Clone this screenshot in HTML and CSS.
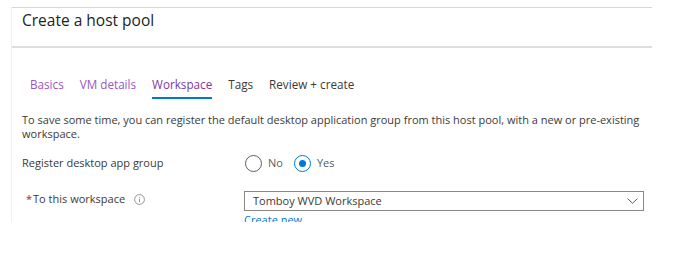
FILE: index.html
```html
<!DOCTYPE html>
<html lang="en">
<head>
    <meta charset="UTF-8">
    <meta name="viewport" content="width=device-width, initial-scale=1.0">
    <title>Create a host pool</title>
    <link rel="stylesheet" href="styles.css">
</head>
<body>
    <div class="blade">
        <div class="blade-header">
            <h1 class="blade-title">Create a host pool</h1>
        </div>
        <div class="blade-content">
            <div class="tabs">
                <span class="tab visited">Basics</span>
                <span class="tab visited">VM details</span>
                <span class="tab active">Workspace</span>
                <span class="tab">Tags</span>
                <span class="tab">Review + create</span>
            </div>

            <p class="intro">To save some time, you can register the default desktop application group from this host pool, with a new or pre-existing workspace.</p>

            <div class="field radio-row">
                <div class="label">Register desktop app group</div>
                <div class="radios">
                    <span class="radio"></span>
                    <span class="radio-text">No</span>
                    <span class="radio checked"></span>
                    <span class="radio-text">Yes</span>
                </div>
            </div>

            <div class="field">
                <div class="label required">
                    <span class="star">*</span>To this workspace
                    <svg class="info" width="11" height="11" viewBox="0 0 11 11">
                        <circle cx="5.5" cy="5.5" r="4.9" fill="none" stroke="#8a8886" stroke-width="0.9"/>
                        <rect x="5.05" y="4.6" width="0.9" height="3.6" fill="#8a8886"/>
                        <circle cx="5.5" cy="3.3" r="0.55" fill="#8a8886"/>
                    </svg>
                </div>
                <div class="control">
                    <div class="dropdown">
                        <span>Tomboy WVD Workspace</span>
                        <svg class="chevron" width="11" height="6" viewBox="0 0 11 6">
                            <polyline points="0.5,0.5 5.5,5.3 10.5,0.5" fill="none" stroke="#605e5c" stroke-width="1"/>
                        </svg>
                    </div>
                    <a class="create-new" href="#">Create new</a>
                </div>
            </div>
        </div>
    </div>
</body>
</html>
```

FILE: styles.css
```css
body {
    margin: 0;
    background-color: #fff;
    font-family: "Open Sans", "Noto Sans", sans-serif;
    color: #3b3a39;
}
.blade {
    width: 640px;
    height: 215px;
    margin: 7px 0 0 11px;
    border-left: 1px solid #f1f1f1;
    overflow: hidden;
}
.blade-header {
    height: 41px;
    border-top: 1px solid #d8d8d8;
    border-bottom: 2px solid #dedede;
    padding: 2px 0 0 10px;
    box-sizing: border-box;
}
.blade-title {
    margin: 0;
    font-size: 15.5px;
    font-weight: 400;
    line-height: 20px;
    color: #201f1e;
}
.blade-content {
    padding: 0 8px 0 10px;
}
.tabs {
    display: flex;
    gap: 16px;
    margin: 28px 0 0 8px;
}
.tab {
    font-size: 11.7px;
    line-height: 16px;
    padding-bottom: 5px;
    border-bottom: 2px solid transparent;
    color: #3b3a39;
}
.tab.visited {
    color: #9b55c4;
}
.tab.active {
    color: #7a3aa3;
    border-bottom-color: #0078d4;
}
.intro {
    margin: 14px 0 0 0;
    font-size: 11px;
    line-height: 13.5px;
}
.field {
    display: flex;
    align-items: flex-start;
    margin-top: 18px;
}
.radio-row {
    align-items: center;
    height: 20px;
    margin-top: 13px;
}
.label {
    width: 222px;
    flex-shrink: 0;
    font-size: 11px;
    line-height: 16px;
    margin-top: 0;
}
.label.required {
    padding-left: 4px;
    box-sizing: border-box;
    display: flex;
    align-items: center;
}
.star {
    color: #a4262c;
    margin-right: 1px;
}
.info {
    margin-left: 9px;
}
.radios {
    display: flex;
    align-items: center;
    padding-left: 1px;
}
.radio {
    width: 15px;
    height: 15px;
    border: 1px solid #605e5c;
    border-radius: 50%;
    display: flex;
    align-items: center;
    justify-content: center;
}
.radio.checked {
    border-color: #0078d4;
}
.radio.checked::after {
    content: "";
    width: 7px;
    height: 7px;
    border-radius: 50%;
    background-color: #0078d4;
}
.radio-text {
    font-size: 11px;
    line-height: 16px;
    color: #605e5c;
    margin: 0 11px 0 6px;
}
.control {
    flex: 1;
}
.dropdown {
    height: 20px;
    box-sizing: border-box;
    border: 1px solid #8a8886;
    display: flex;
    align-items: center;
    justify-content: space-between;
    padding: 0 5px 0 8px;
    font-size: 11px;
    line-height: 18px;
}
.create-new {
    display: block;
    margin-top: 1px;
    font-size: 11px;
    line-height: 16px;
    color: #0078d4;
    text-decoration: none;
}
```
